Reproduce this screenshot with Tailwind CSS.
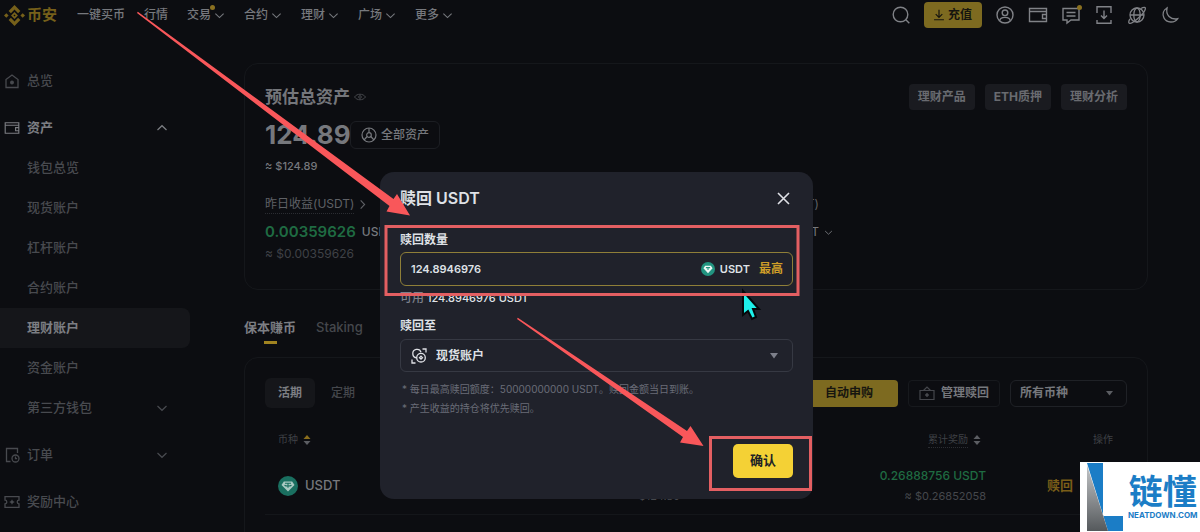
<!DOCTYPE html>
<html lang="zh-CN">
<head>
<meta charset="utf-8">
<meta name="viewport" content="width=device-width, initial-scale=1">
<title>理财账户 - 赎回 USDT</title>
<script src="https://cdn.jsdelivr.net/npm/@tailwindcss/browser@4"></script>
</head>
<body class="bg-[#0c0d11] font-['Inter','Noto_Sans_CJK_SC',sans-serif] text-xs text-[#76787d]">
<svg class="hidden" aria-hidden="true">
  <symbol id="down" viewBox="0 0 12 12"><path d="M1.5 4 6 8.3 10.5 4" fill="none" stroke="currentColor" stroke-width="1.2"/></symbol>
  <symbol id="wallet" viewBox="0 0 20 20"><path d="M1.500 3.500h17v13h-17zM1.500 6.500h17M18.500 9.500h-4v4h4" fill="none" stroke="currentColor" stroke-width="1.400"/></symbol>
  <symbol id="tether" viewBox="0 0 20 20"><path d="M5.800 5.500h8.400l2.300 3.500-6.500 6.500L3.500 9z" fill="#a9c9c2"/><path d="M7 7.300h6M10 7.300v4.500M6.500 9.300c1.500 1 5.500 1 7 0" fill="none" stroke="#1a6f60" stroke-width="1.100"/></symbol>
  <symbol id="sort" viewBox="0 0 8 10"><path d="M4 0 7.500 4h-7z"/><path class="text-[#5b5d62]" fill="currentColor" d="M4 10 .5 6h7z"/></symbol>
</svg>

<div class="relative h-screen overflow-hidden">
  <header class="flex h-[30px] items-center justify-between pr-5 pl-1">
    <div class="flex items-center">
      <a href="#" class="flex items-center gap-[2px] text-[15px] font-bold text-[#76601a]">
        <svg class="size-[21px]" viewBox="0 0 20 20" fill="currentColor"><path d="m10 0 5.600 5.600-2.200 2.200L10 4.400 6.600 7.800 4.400 5.600zM10 20l5.600-5.600-2.200-2.200L10 15.600l-3.400-3.400-2.200 2.200zM2.200 7.800 4.400 10l-2.200 2.200L0 10zM17.800 7.800 20 10l-2.200 2.200L15.600 10zM10 6.700l3.300 3.300-3.300 3.300L6.700 10z"/><path fill="#0c0d11" d="m10 9 1 1-1 1-1-1z"/></svg>
        币安</a>
      <nav class="ml-5 flex items-center gap-[19px] font-medium">
        <a href="#">一键买币</a>
        <a href="#">行情</a>
        <a href="#" class="relative flex items-center gap-[3px]">交易<svg class="size-[11px]"><use href="#down"/></svg><span class="absolute -top-[2px] left-[23px] size-[5px] rounded-full bg-[#8a7020]"></span></a>
        <a href="#" class="flex items-center gap-[3px]">合约<svg class="size-[11px]"><use href="#down"/></svg></a>
        <a href="#" class="flex items-center gap-[3px]">理财<svg class="size-[11px]"><use href="#down"/></svg></a>
        <a href="#" class="flex items-center gap-[3px]">广场<svg class="size-[11px]"><use href="#down"/></svg></a>
        <a href="#" class="flex items-center gap-[3px]">更多<svg class="size-[11px]"><use href="#down"/></svg></a>
      </nav>
    </div>
    <div class="flex items-center gap-[13px] text-[#808287]">
      <button aria-label="搜索"><svg class="block size-5" viewBox="0 0 20 20" fill="none" stroke="currentColor" stroke-width="1.400"><circle cx="9.500" cy="9.500" r="7.300"/><path d="m14.800 14.800 3.500 3.500"/></svg></button>
      <button class="flex h-[26px] items-center gap-[4px] rounded-[4px] bg-[#7d6a20] px-[10px] font-bold text-[#16150f]"><svg class="size-2.5 scale-110" viewBox="0 0 10 10" fill="none" stroke="currentColor" stroke-width="1.100"><path d="M5 0v7M2 4.200l3 3 3-3M.5 9.500h9"/></svg>充值</button>
      <button aria-label="用户"><svg class="block size-5" viewBox="0 0 20 20" fill="none" stroke="currentColor" stroke-width="1.400"><circle cx="10" cy="10" r="8"/><circle cx="10" cy="7.800" r="2.800"/><path d="M4.800 15.800c.3-4.600 10-4.600 10.400 0"/></svg></button>
      <button aria-label="钱包"><svg class="block size-5"><use href="#wallet"/></svg></button>
      <button aria-label="消息" class="relative"><svg class="block size-5" viewBox="0 0 20 20" fill="none" stroke="currentColor" stroke-width="1.400"><path d="M2 3.500h16v11.500h-8l-4 3v-3H2zM5.500 7.500h9M5.500 11h9"/></svg><span class="absolute top-0 -right-px size-[5px] rounded-full bg-[#8a7020]"></span></button>
      <button aria-label="下载"><svg class="block size-5" viewBox="0 0 20 20" fill="none" stroke="currentColor" stroke-width="1.400"><path d="M3 5V1.700h14V5M3 15v3.300h14V15M3 5v3M17 5v3M10 5.500v8M7 10.500l3 3 3-3"/></svg></button>
      <button aria-label="语言"><svg class="block size-5" viewBox="0 0 20 20" fill="none" stroke="currentColor" stroke-width="1.300"><circle cx="10" cy="10" r="7"/><ellipse cx="10" cy="10" rx="3.200" ry="7"/><path d="M3 10h14M14 3.500c3-1.800 4.800-1.500 4.300.6C17.500 8 7 18 3.300 18.300c-2.300.1-1.800-2.300-.3-4.500"/></svg></button>
      <button aria-label="主题"><svg class="block size-5" viewBox="0 0 20 20" fill="none" stroke="currentColor" stroke-width="1.400"><path d="M7 3C3.500 5 2 9 4 13c2.600 5 10.500 5.300 13.500.8C10.500 15 5.500 10 7 3z"/></svg></button>
    </div>
  </header>

  <div class="flex pt-[31px]">
    <aside class="flex w-[190px] shrink-0 flex-col gap-[7px] text-[13px] font-medium text-[#484a4f]">
      <a href="#" class="flex h-10 items-center gap-[7px] pl-1"><svg class="size-4" viewBox="0 0 16 16" fill="none" stroke="currentColor" stroke-width="1.300"><path d="M2 6.500 8 2l6 4.500v8H2z"/><circle cx="8" cy="9.500" r="1.300" fill="currentColor"/></svg>总览</a>
      <div class="flex flex-col">
        <a href="#" class="flex h-10 items-center gap-[7px] pr-[22px] pl-1 font-bold text-[#7c7e83]"><svg class="size-4"><use href="#wallet"/></svg>资产<svg class="ml-auto size-3 rotate-180"><use href="#down"/></svg></a>
        <a href="#" class="flex h-10 items-center pl-[27px]">钱包总览</a>
        <a href="#" class="flex h-10 items-center pl-[27px]">现货账户</a>
        <a href="#" class="flex h-10 items-center pl-[27px]">杠杆账户</a>
        <a href="#" class="flex h-10 items-center pl-[27px]">合约账户</a>
        <a href="#" class="flex h-10 items-center rounded-r-[8px] bg-[#15161a] pl-[27px] font-bold text-[#7c7e83]">理财账户</a>
        <a href="#" class="flex h-10 items-center pl-[27px]">资金账户</a>
        <a href="#" class="flex h-10 items-center justify-between pr-[22px] pl-[27px]">第三方钱包<svg class="size-3"><use href="#down"/></svg></a>
      </div>
      <a href="#" class="flex h-10 items-center gap-[7px] pr-[22px] pl-1"><svg class="size-4" viewBox="0 0 16 16" fill="none" stroke="currentColor" stroke-width="1.300"><path d="M13.500 6V1.500h-11v13h4"/><circle cx="11.500" cy="11.500" r="3.500"/><path d="M11.500 9.500v2.200h1.600"/></svg>订单<svg class="ml-auto size-3"><use href="#down"/></svg></a>
      <a href="#" class="flex h-10 items-center gap-[7px] pl-1"><svg class="size-4" viewBox="0 0 16 16" fill="none" stroke="currentColor" stroke-width="1.300"><path d="M1 2.700h14v3.500a1.800 1.800 0 0 0 0 3.600v3.500H1V9.800a1.800 1.800 0 0 0 0-3.600z"/><path d="m8 5.200.9 1.900 1.900.9-1.900.9-.9 1.900-.9-1.900L5.200 8l1.900-.9z" fill="currentColor" stroke="none"/></svg>奖励中心</a>
    </aside>

    <main class="mr-[52px] ml-[54px] min-w-0 flex-1 pt-[2px]">
      <section class="h-[227px] rounded-[14px] border border-[#15171b] px-5 pt-5">
        <div class="flex h-[26px] items-center justify-between">
          <h1 class="flex items-center gap-1 text-[17px] font-bold text-[#74767b]">预估总资产<svg class="size-3 text-[#44464b]" viewBox="0 0 12 12" fill="none" stroke="currentColor"><path d="M.5 6C3 2.300 9 2.300 11.500 6 9 9.700 3 9.700.5 6z"/><circle cx="6" cy="6" r="1.300"/></svg></h1>
          <div class="flex gap-[10px] font-bold text-[#696b70]">
            <button class="h-[26px] rounded-[4px] bg-[#1a1b20] px-[9px]">理财产品</button>
            <button class="h-[26px] rounded-[4px] bg-[#1a1b20] px-[9px]">ETH质押</button>
            <button class="h-[26px] rounded-[4px] bg-[#1a1b20] px-[9px]">理财分析</button>
          </div>
        </div>
        <div class="mt-[11px] flex h-7 items-center">
          <span class="w-[85px] text-[26px] font-bold">124.89</span>
          <button class="flex h-7 items-center gap-[4px] rounded-[6px] border border-[#1c1e23] px-[10px] font-medium"><svg class="size-4" viewBox="0 0 16 16" fill="none" stroke="currentColor" stroke-width="1.200"><circle cx="8" cy="8" r="7"/><path d="M8 1v4.500M6.200 9.500 3 13M9.800 9.500 13 13"/><circle cx="8" cy="8" r="2.300"/></svg>全部资产</button>
        </div>
        <p class="mt-2 h-[18px] text-[11px] leading-[18px] font-medium">≈ $124.89</p>
        <div class="mt-5 flex justify-between pr-[294px]">
          <div>
            <div class="flex h-[18px] items-center gap-[3px] text-[#5f6166]"><span class="border-b border-dotted border-[#2b2d32] leading-[18px]">昨日收益(USDT)</span><svg class="size-[11px] -rotate-90"><use href="#down"/></svg></div>
            <div class="mt-2 flex h-[22px] items-center gap-[6px]"><span class="text-[15px] font-semibold text-[#1f6b42]">0.00359626</span><span class="font-medium">USDT</span></div>
            <p class="mt-[2px] h-[18px] leading-[18px] text-[#3f4146]">≈ $0.00359626</p>
          </div>
          <div class="flex flex-col">
            <div class="flex h-[18px] items-center pr-[14px] text-[#5f6166]">累计收益(USDT)</div>
            <div class="mt-2 flex h-[22px] items-center justify-end gap-[5px]">USDT<svg class="size-[9px]"><use href="#down"/></svg></div>
          </div>
        </div>
      </section>

      <div class="mt-[27px] flex h-[28px] gap-5 text-[13px]" role="tablist">
        <button role="tab" aria-selected="true" class="flex flex-col items-center font-bold text-[#7c7e83]"><span class="leading-5">保本赚币</span><span class="mt-1 h-[3px] w-[13px] bg-[#a08320]"></span></button>
        <button role="tab" aria-selected="false" class="self-start leading-5 font-medium text-[#45474c]">Staking</button>
      </div>

      <section class="mt-[12px] min-h-[300px] rounded-[14px] border border-[#15171b] px-5 pt-5">
        <div class="flex h-[30px] items-center justify-between font-medium">
          <div class="flex items-center gap-4 text-[#45474c]">
            <button class="h-[30px] rounded-[6px] bg-[#15161a] px-[13px] font-bold text-[#7c7e83]">活期</button>
            <button>定期</button>
          </div>
          <div class="flex gap-[10px]">
            <button class="h-[27px] rounded-[4px] bg-[#7d6a20] px-[25px] font-bold text-[#16150f]">自动申购</button>
            <button class="flex h-[27px] items-center gap-[6px] rounded-[4px] border border-[#17191d] px-[10px] font-bold"><svg class="size-4 text-[#45474c]" viewBox="0 0 16 16" fill="none" stroke="currentColor" stroke-width="1.200"><path d="M1 5.500h14v9H1zM4.500 5.500 8 2l3.500 3.500"/><path d="m8 7.800 2.200 2.200L8 12.200 5.800 10z" fill="currentColor" stroke="none"/></svg>管理赎回</button>
            <div class="relative">
              <select aria-label="币种筛选" class="h-[27px] w-[117px] appearance-none rounded-[6px] border border-[#1f2126] px-[9px] font-bold outline-none"><option>所有币种</option></select>
              <svg class="pointer-events-none absolute top-[11px] right-[14px] h-[5px] w-[7px]" viewBox="0 0 7 5" fill="#5b5d62"><path d="M0 0h7L3.500 4.500z"/></svg>
            </div>
          </div>
        </div>
        <table class="mt-[14px] w-full table-fixed">
          <thead>
            <tr class="h-9 text-[10px] text-[#3f4146]">
              <th class="pl-[13px] text-left font-normal"><span class="flex items-center gap-[5px]">币种<svg class="h-[10px] w-2 text-[#8a6d1c]" fill="currentColor"><use href="#sort"/></svg></span></th>
              <th class="w-[213px]"></th>
              <th class="w-[306px] pr-[5px] font-normal"><span class="flex items-center justify-end gap-[5px]"><span class="border-b border-dotted border-[#2b2d32] leading-[15px]">累计奖励</span><svg class="h-[10px] w-2 text-[#5b5d62]" fill="currentColor"><use href="#sort"/></svg></span></th>
              <th class="w-[141px] pr-[14px] text-right font-normal">操作</th>
            </tr>
          </thead>
          <tbody>
            <tr class="h-14 border-b border-[#14161a]">
              <td class="pl-[13px]"><div class="flex items-center gap-[7px] text-[13px] font-medium"><span class="rounded-full bg-[#1a6f60]"><svg class="block size-5"><use href="#tether"/></svg></span>USDT</div></td>
              <td class="text-right"><div class="leading-[21px]">124.89 USDT</div><div class="text-[11px] leading-[21px] text-[#45474c]">≈ $124.89</div></td>
              <td class="text-right"><div class="leading-[21px] font-medium text-[#1f6b42]">0.26888756 USDT</div><div class="text-[11px] leading-[21px] text-[#45474c]">≈ $0.26852058</div></td>
              <td class="pr-[14px]"><div class="flex justify-end gap-[14px] text-[13px] font-bold text-[#7a5d18]"><a href="#">赎回</a><a href="#">申购</a></div></td>
            </tr>
          </tbody>
        </table>
      </section>
    </main>
  </div>

  <div class="absolute inset-0 flex items-start justify-center pt-[172px] pr-[7px]">
    <div role="dialog" aria-labelledby="dlg-title" class="w-[433px] rounded-[14px] bg-[#20222b] px-5 pt-[15px] pb-[21px] text-[#dfe1e6]">
      <div class="flex h-[22px] items-center justify-between">
        <h2 id="dlg-title" class="text-base font-semibold">赎回 USDT</h2>
        <button aria-label="关闭" class="px-[3px]"><svg class="block size-[13px]" viewBox="0 0 13 13" fill="none" stroke="currentColor" stroke-width="1.600"><path d="m1 1 11 11M12 1 1 12"/></svg></button>
      </div>
      <label for="amount" class="mt-[22px] block h-[18px] leading-[18px] font-semibold">赎回数量</label>
      <div class="mt-[3px] flex h-[34px] items-center rounded-[6px] border border-[#8f7f38] px-[9px]">
        <input id="amount" value="124.8946976" class="min-w-0 flex-1 bg-transparent pl-px text-[11px] font-semibold outline-none">
        <span class="rounded-full bg-[#229480]"><svg class="block size-[14px]" viewBox="0 0 20 20"><path d="M6 5.500h8l2.500 3.500-6.500 7L3.500 9z" fill="#eef8f6"/><path d="M7 8h6M10 8v3.500" stroke="#229480" stroke-width="1.500"/></svg></span>
        <span class="ml-[5px] text-[11px] font-semibold">USDT</span>
        <button class="ml-[9px] font-bold text-[#cf9e28]">最高</button>
      </div>
      <p class="mt-[3px] h-[18px] text-[11px] leading-[18px] font-medium"><span class="text-xs text-[#7d808b]">可用</span> 124.8946976 USDT</p>
      <label for="target" class="mt-[10px] block h-[18px] leading-[18px] font-semibold">赎回至</label>
      <div class="relative mt-[4px]">
        <select id="target" class="block h-[33px] w-full appearance-none rounded-[6px] border border-[#363943] pl-[35px] font-semibold outline-none"><option>现货账户</option></select>
        <svg class="pointer-events-none absolute top-[9px] left-[11px] size-4" viewBox="0 0 16 16" fill="none" stroke="currentColor" stroke-width="1.300"><path d="M11.500 1H15v3.500M1 11.500V15h3.500M5.800 9.800A4.200 4.200 0 1 1 10 4.300"/><circle cx="10" cy="9.700" r="4.300"/><path d="m10 8.200 1.500 1.500-1.500 1.500-1.500-1.500z"/></svg>
        <svg class="pointer-events-none absolute top-[14px] right-[15px] h-[6px] w-2" viewBox="0 0 8 6" fill="#7d808b"><path d="M0 0h8L4 5.500z"/></svg>
      </div>
      <ul class="mt-2 pl-[2px] text-[10px] leading-[19px] text-[#6a6d78]">
        <li>* 每日最高赎回额度：50000000000 USDT。赎回金额当日到账。</li>
        <li>* 产生收益的持仓将优先赎回。</li>
      </ul>
      <div class="mt-[26px] flex justify-end">
        <button class="h-[34px] rounded-[5px] bg-[#f4d135] px-[17px] text-[13px] font-bold text-[#202126]">确认</button>
      </div>
    </div>
  </div>

  <svg class="pointer-events-none absolute top-0 left-0 h-[532px] w-[1200px]" viewBox="0 0 1200 532" aria-hidden="true">
    <path d="M743 291v24l5-4 4 8 4-2-3-8h6z" fill="#1df0ea" stroke="#05090b" stroke-width="2"/>
    <g fill="none" stroke="#e35f62" stroke-width="3">
      <path d="M386 226.500h412v68H386zM710.500 437.500h100v52h-100z"/>
    </g>
    <g fill="#f9575a">
      <path d="M137 13 137.800 11.800 393.500 199 397 194 410 215.500 386.500 211.500 389.500 206z"/>
      <path d="M517 319 517.800 317.800 687 431 690.500 426 703.500 446 680 442.500 683 437z"/>
    </g>
  </svg>

  <div class="absolute right-0 bottom-0 flex h-[70px] w-[120px] bg-white text-[#1b7dc6]">
    <svg class="ml-[7px] h-[70px] w-9 shrink-0" viewBox="0 0 36 70"><defs><linearGradient id="steel" x1="0" y1="0" x2="0" y2="1"><stop offset="0" stop-color="#c4c6c8"/><stop offset="1" stop-color="#55595c"/></linearGradient></defs><path d="M0 1h16v53h20v15H21z" fill="#1b7dc6"/><path d="M0 3v66h21z" fill="url(#steel)"/></svg>
    <div class="flex flex-col items-center pt-3 pl-[5px]">
      <span class="text-[34px] leading-9 font-bold">链懂</span>
      <span class="text-[8px] leading-[10px] font-bold">NEATDOWN.COM</span>
    </div>
  </div>
</div>
</body>
</html>
